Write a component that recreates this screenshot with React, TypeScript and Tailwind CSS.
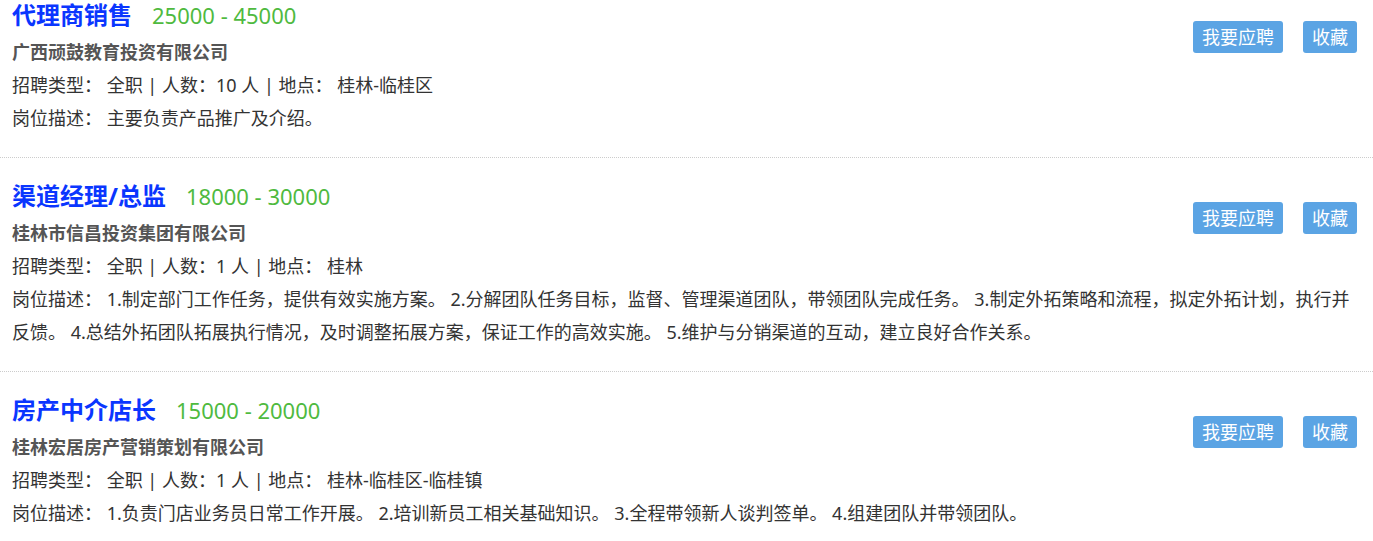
import React from "react";

type Job = {
  title: string;
  salary: string;
  company: string;
  count: string;
  place: string;
  desc: string;
  date?: string;
};

const jobs: Job[] = [
  {
    title: "代理商销售",
    salary: "25000 - 45000",
    company: "广西顽鼓教育投资有限公司",
    count: "10",
    place: "桂林-临桂区",
    desc: "主要负责产品推广及介绍。",
    date: "2022-03-18",
  },
  {
    title: "渠道经理/总监",
    salary: "18000 - 30000",
    company: "桂林市信昌投资集团有限公司",
    count: "1",
    place: "桂林",
    desc: "1.制定部门工作任务，提供有效实施方案。 2.分解团队任务目标，监督、管理渠道团队，带领团队完成任务。 3.制定外拓策略和流程，拟定外拓计划，执行并反馈。 4.总结外拓团队拓展执行情况，及时调整拓展方案，保证工作的高效实施。 5.维护与分销渠道的互动，建立良好合作关系。",
  },
  {
    title: "房产中介店长",
    salary: "15000 - 20000",
    company: "桂林宏居房产营销策划有限公司",
    count: "1",
    place: "桂林-临桂区-临桂镇",
    desc: "1.负责门店业务员日常工作开展。 2.培训新员工相关基础知识。 3.全程带领新人谈判签单。 4.组建团队并带领团队。",
  },
];

function JobItem({ job }: { job: Job }) {
  return (
    <div className="relative border-b border-dotted border-[#cccccc] pl-3 pr-4 pt-5 pb-[22px] flow-root">
      {job.date && (
        <span className="absolute right-4 top-[7px] text-[18px] leading-[18px] font-bold text-[#d9700f]">
          {job.date}
        </span>
      )}
      <div className="float-right mt-6 flex gap-5">
        <button className="h-8 rounded-[3px] bg-[#5ba4e4] px-[9px] text-[18px] leading-8 text-white">
          我要应聘
        </button>
        <button className="h-8 rounded-[3px] bg-[#5ba4e4] px-[9px] text-[18px] leading-8 text-white">
          收藏
        </button>
      </div>
      <div className="h-[39px] overflow-hidden text-[20px] leading-[39px]">
        <span className="text-[24px] leading-none font-bold text-[#0a36ff]">{job.title}</span>
        <span className="ml-5 text-[22px] leading-none text-[#4fba3f]">{job.salary}</span>
      </div>
      <div className="text-[18px] leading-[33px] font-bold text-[#555555]">{job.company}</div>
      <div className="text-[18px] leading-[33px] text-[#333333]">
        招聘类型： 全职 | 人数：{job.count} 人 | 地点： {job.place}
      </div>
      <div className="text-[18px] leading-[33px] text-[#333333]">岗位描述： {job.desc}</div>
    </div>
  );
}

export default function App() {
  return (
    <div
      className="h-[541px] w-full overflow-hidden bg-white"
      style={{ fontFamily: '"Noto Sans", "Noto Sans CJK SC", sans-serif' }}
    >
      <div className="-mt-[23px]">
        {jobs.map((j) => (
          <JobItem key={j.title} job={j} />
        ))}
      </div>
    </div>
  );
}
